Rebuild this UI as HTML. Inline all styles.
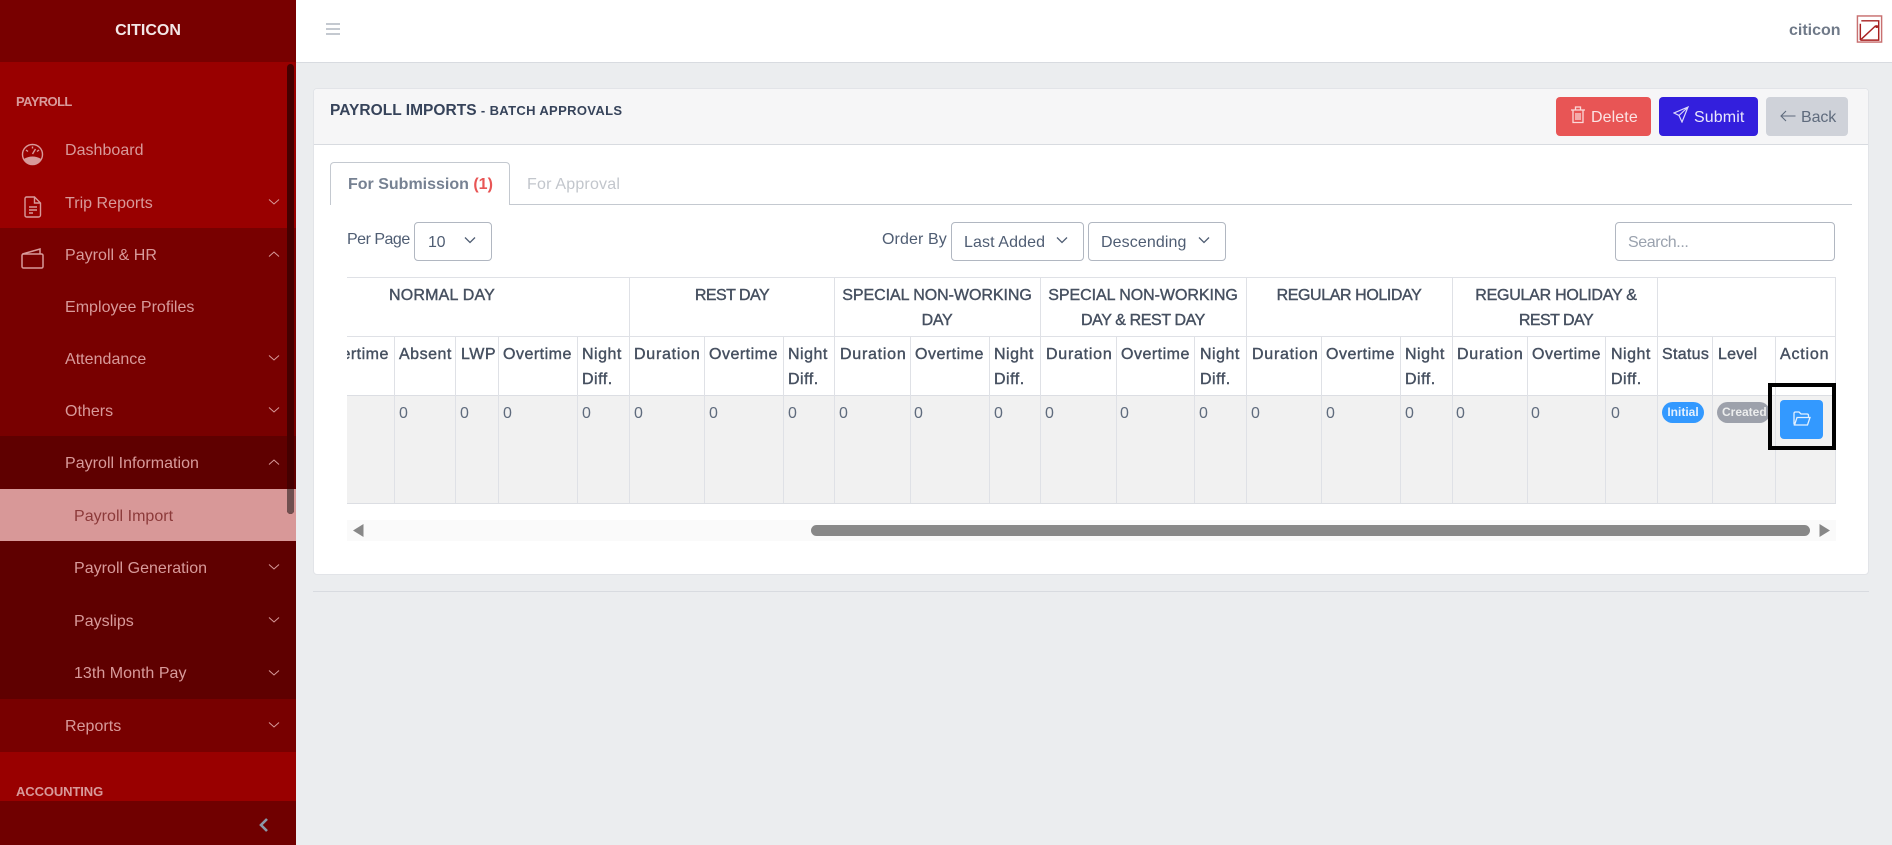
<!DOCTYPE html>
<html lang="en"><head><meta charset="utf-8"><title>Payroll Imports</title>
<style>
html,body{margin:0;padding:0;width:1892px;height:845px;overflow:hidden;background:#ebedef;font-family:"Liberation Sans",sans-serif;color:#4f5d73}
div,span,svg{position:absolute;box-sizing:border-box}
.t{white-space:nowrap;height:20px;line-height:20px;font-size:16px;letter-spacing:.35px;margin-top:1px}
.s{color:#d89a9a;left:65px;letter-spacing:.03px}
.s2{left:74px}
.h{color:#465060;-webkit-text-stroke:.4px #465060;letter-spacing:.5px}
.c{width:300px;text-align:center}
.v{color:#5f6b7d;letter-spacing:0;}
.vl{width:1px;background:#dfe1e6}
.chev{left:267px;width:14px;height:8px}
.sel{top:222px;height:39px;background:#fff;border:1px solid #b1b7c1;border-radius:4px}
</style></head><body>

<!-- sidebar -->
<div style="left:0;top:0;width:296px;height:845px;background:#990000"></div>
<div style="left:0;top:0;width:296px;height:62px;background:#780000"></div>
<div style="left:0;top:228px;width:296px;height:524px;background:#780000"></div>
<div style="left:0;top:436px;width:296px;height:263px;background:#5f0000"></div>
<div style="left:0;top:489px;width:296px;height:52px;background:#d89898"></div>
<div style="left:0;top:801px;width:296px;height:44px;background:#700000"></div>
<div style="left:287px;top:64px;width:7px;height:450px;background:#450000;border-radius:4px"></div>
<div style="left:287px;top:489px;width:7px;height:25px;background:#705050;border-radius:0 0 4px 4px"></div>

<div class="t" style="left:0;width:296px;text-align:center;top:20px;color:#f3e6e6;font-weight:bold;letter-spacing:0">CITICON</div>
<div class="t" style="left:16px;top:91px;color:#d89a9a;font-size:13px;font-weight:bold;letter-spacing:-.6px">PAYROLL</div>
<div class="t s" style="top:140px">Dashboard</div>
<div class="t s" style="top:193px">Trip Reports</div>
<div class="t s" style="top:245px">Payroll &amp; HR</div>
<div class="t s" style="top:297px">Employee Profiles</div>
<div class="t s" style="top:349px">Attendance</div>
<div class="t s" style="top:401px">Others</div>
<div class="t s" style="top:453px">Payroll Information</div>
<div class="t s s2" style="top:506px;color:#8c3a3a">Payroll Import</div>
<div class="t s s2" style="top:558px">Payroll Generation</div>
<div class="t s s2" style="top:611px">Payslips</div>
<div class="t s s2" style="top:663px">13th Month Pay</div>
<div class="t s" style="top:716px">Reports</div>
<div class="t" style="left:16px;top:781px;color:#d89a9a;font-size:13px;font-weight:bold;letter-spacing:-.1px">ACCOUNTING</div>

<svg style="left:21px;top:143px;width:23px;height:23px" viewBox="0 0 23 23" fill="none" stroke="#d89a9a" stroke-width="1.400"><circle cx="11.500" cy="11.500" r="10"/><path d="M2.800 16Q11.500 11 20.200 16A10 10 0 0 1 2.800 16Z" fill="#d89a9a" stroke="none"/><path d="M11.500 11l3-5M11.500 3.500v2M5 7l2 1.500M18 7l-2 1.500"/></svg>
<svg style="left:24px;top:196px;width:18px;height:22px" viewBox="0 0 18 22" fill="none" stroke="#d89a9a" stroke-width="1.400"><path d="M2.500 1h8l6 6v12a2 2 0 0 1-2 2h-12a1.500 1.500 0 0 1-1.500-1.500V2.500A1.500 1.500 0 0 1 2.500 1zM10.500 1v6h6M5 11h8M5 14h8M5 17h4"/></svg>
<svg style="left:21px;top:248px;width:23px;height:21px" viewBox="0 0 23 21" fill="none" stroke="#d89a9a" stroke-width="1.500"><rect x="1" y="6" width="21" height="14" rx="1.500"/><path d="M1.500 6L19 1v5"/></svg>

<svg class="chev" style="top:198px" viewBox="0 0 14 8" fill="none" stroke="#d89a9a"><path d="M2 1.500l5 4.500 5-4.500"/></svg>
<svg class="chev" style="top:250px" viewBox="0 0 14 8" fill="none" stroke="#d89a9a"><path d="M2 6.500l5-4.500 5 4.500"/></svg>
<svg class="chev" style="top:354px" viewBox="0 0 14 8" fill="none" stroke="#d89a9a"><path d="M2 1.500l5 4.500 5-4.500"/></svg>
<svg class="chev" style="top:406px" viewBox="0 0 14 8" fill="none" stroke="#d89a9a"><path d="M2 1.500l5 4.500 5-4.500"/></svg>
<svg class="chev" style="top:458px" viewBox="0 0 14 8" fill="none" stroke="#d89a9a"><path d="M2 6.500l5-4.500 5 4.500"/></svg>
<svg class="chev" style="top:563px" viewBox="0 0 14 8" fill="none" stroke="#d89a9a"><path d="M2 1.500l5 4.500 5-4.500"/></svg>
<svg class="chev" style="top:616px" viewBox="0 0 14 8" fill="none" stroke="#d89a9a"><path d="M2 1.500l5 4.500 5-4.500"/></svg>
<svg class="chev" style="top:669px" viewBox="0 0 14 8" fill="none" stroke="#d89a9a"><path d="M2 1.500l5 4.500 5-4.500"/></svg>
<svg class="chev" style="top:721px" viewBox="0 0 14 8" fill="none" stroke="#d89a9a"><path d="M2 1.500l5 4.500 5-4.500"/></svg>
<svg style="left:258px;top:817px;width:11px;height:16px" viewBox="0 0 11 16" fill="none" stroke="#8a98a8" stroke-width="2.600"><path d="M9 2L3 8l6 6"/></svg>

<!-- topbar -->
<div style="left:296px;top:0;width:1596px;height:63px;background:#fff;border-bottom:1px solid #d8dbe0"></div>
<svg style="left:325px;top:22px;width:16px;height:14px" viewBox="0 0 16 14" stroke="#8a93a1" stroke-width="1"><path d="M1 2h14M1 7h14M1 12h14"/></svg>
<div class="t" style="left:1789px;top:20px;color:#6f7988;font-weight:bold;letter-spacing:0">citicon</div>
<svg style="left:1856px;top:15px;width:28px;height:29px" viewBox="0 0 28 30" fill="none" stroke="#a82020"><rect x="1" y="1" width="25" height="27" stroke="#c87070" stroke-width="1.500"/><path d="M5 6h18v20H4" stroke-width="1.500"/><path d="M4 9v17M5 25L20 11" stroke-width="1.500"/><circle cx="21" cy="12" r="1" fill="#a82020"/></svg>

<!-- card -->
<div style="left:313px;top:88px;width:1556px;height:487px;background:#fff;border:1px solid #e2e4e8;border-radius:4px"></div>
<div style="left:314px;top:89px;width:1554px;height:56px;background:#f6f6f7;border-bottom:1px solid #d8dbe0;border-radius:4px 4px 0 0"></div>
<div class="t" style="left:330px;top:100px;color:#36435a;font-weight:bold;font-size:15.500px;letter-spacing:.03px">PAYROLL IMPORTS <span style="position:static;font-size:13px;letter-spacing:.35px">- BATCH APPROVALS</span></div>

<div style="left:1556px;top:97px;width:95px;height:39px;background:#e85555;border-radius:4px"></div>
<svg style="left:1571px;top:106px;width:14px;height:18px" viewBox="0 0 14 18" fill="none" stroke="#fbd9d9" stroke-width="1.300"><path d="M0 4h14M4.500 3.500V1h5v2.500M2 4.500v12h10v-12M5 7v7M7 7v7M9 7v7"/></svg>
<div class="t" style="left:1591px;top:107px;color:#fbe3e3;letter-spacing:.1px">Delete</div>
<div style="left:1659px;top:97px;width:99px;height:39px;background:#331fdd;border-radius:4px"></div>
<svg style="left:1673px;top:106px;width:16px;height:17px" viewBox="0 0 16 17" fill="none" stroke="#dcd8fb" stroke-width="1.200"><path d="M15 1L1 7l5 2.500L9 16zM15 1L6 9.500"/></svg>
<div class="t" style="left:1694px;top:107px;color:#e9e7fc;letter-spacing:.1px">Submit</div>
<div style="left:1766px;top:97px;width:82px;height:39px;background:#cfd2d9;border-radius:4px"></div>
<svg style="left:1780px;top:109px;width:16px;height:14px" viewBox="0 0 16 14" fill="none" stroke="#5f6b7d" stroke-width="1.100"><path d="M15.500 7H1M6 2L1 7l5 5"/></svg>
<div class="t" style="left:1801px;top:107px;color:#5f6b7d;letter-spacing:-.1px">Back</div>

<!-- tabs -->
<div style="left:330px;top:204px;width:1522px;height:1px;background:#c4c9d0"></div>
<div style="left:330px;top:162px;width:180px;height:43px;background:#fff;border:1px solid #c4c9d0;border-bottom:0;border-radius:4px 4px 0 0"></div>
<div class="t" style="left:348px;top:174px;color:#768192;font-weight:bold;letter-spacing:0">For Submission <span style="position:static;color:#e85555">(1)</span></div>
<div class="t" style="left:527px;top:174px;color:#c2c6cc;letter-spacing:.2px">For Approval</div>

<!-- controls -->
<div class="t" style="left:347px;top:229px;color:#4f5d73;letter-spacing:-.5px">Per Page</div>
<div class="sel" style="left:414px;width:78px"></div>
<div class="t" style="left:428px;top:232px;color:#4f5d73;letter-spacing:-.3px">10</div>
<svg style="left:464px;top:236px;width:12px;height:8px" viewBox="0 0 12 8" fill="none" stroke="#4f5d73" stroke-width="1.300"><path d="M1 1.500l5 5 5-5"/></svg>
<div class="t" style="left:882px;top:229px;color:#4f5d73;letter-spacing:.1px">Order By</div>
<div class="sel" style="left:951px;width:133px"></div>
<div class="t" style="left:964px;top:232px;color:#4f5d73;letter-spacing:.1px">Last Added</div>
<svg style="left:1056px;top:236px;width:12px;height:8px" viewBox="0 0 12 8" fill="none" stroke="#4f5d73" stroke-width="1.300"><path d="M1 1.500l5 5 5-5"/></svg>
<div class="sel" style="left:1088px;width:138px"></div>
<div class="t" style="left:1101px;top:232px;color:#4f5d73;letter-spacing:.1px">Descending</div>
<svg style="left:1198px;top:236px;width:12px;height:8px" viewBox="0 0 12 8" fill="none" stroke="#4f5d73" stroke-width="1.300"><path d="M1 1.500l5 5 5-5"/></svg>
<div class="sel" style="left:1615px;width:220px"></div>
<div class="t" style="left:1628px;top:232px;color:#9aa2ae;letter-spacing:-.4px">Search...</div>

<!-- table -->
<div style="left:347px;top:395px;width:1489px;height:108px;background:#f1f1f1"></div>
<div style="left:347px;top:277px;width:1489px;height:1px;background:#dfe1e6"></div>
<div style="left:347px;top:336px;width:1489px;height:1px;background:#dfe1e6"></div>
<div style="left:347px;top:395px;width:1489px;height:1px;background:#dcdee3"></div>
<div style="left:347px;top:503px;width:1489px;height:1px;background:#dcdee3"></div>

<div class="vl" style="left:629px;top:277px;height:59px"></div>
<div class="vl" style="left:834px;top:277px;height:59px"></div>
<div class="vl" style="left:1040px;top:277px;height:59px"></div>
<div class="vl" style="left:1246px;top:277px;height:59px"></div>
<div class="vl" style="left:1452px;top:277px;height:59px"></div>
<div class="vl" style="left:1657px;top:277px;height:59px"></div>
<div class="vl" style="left:1835px;top:277px;height:226px"></div>

<div class="vl" style="left:394px;top:336px;height:167px"></div>
<div class="vl" style="left:455px;top:336px;height:167px"></div>
<div class="vl" style="left:498px;top:336px;height:167px"></div>
<div class="vl" style="left:577px;top:336px;height:167px"></div>
<div class="vl" style="left:629px;top:336px;height:167px"></div>
<div class="vl" style="left:704px;top:336px;height:167px"></div>
<div class="vl" style="left:783px;top:336px;height:167px"></div>
<div class="vl" style="left:834px;top:336px;height:167px"></div>
<div class="vl" style="left:910px;top:336px;height:167px"></div>
<div class="vl" style="left:989px;top:336px;height:167px"></div>
<div class="vl" style="left:1040px;top:336px;height:167px"></div>
<div class="vl" style="left:1116px;top:336px;height:167px"></div>
<div class="vl" style="left:1194px;top:336px;height:167px"></div>
<div class="vl" style="left:1246px;top:336px;height:167px"></div>
<div class="vl" style="left:1321px;top:336px;height:167px"></div>
<div class="vl" style="left:1400px;top:336px;height:167px"></div>
<div class="vl" style="left:1452px;top:336px;height:167px"></div>
<div class="vl" style="left:1527px;top:336px;height:167px"></div>
<div class="vl" style="left:1605px;top:336px;height:167px"></div>
<div class="vl" style="left:1657px;top:336px;height:167px"></div>
<div class="vl" style="left:1712px;top:336px;height:167px"></div>
<div class="vl" style="left:1775px;top:336px;height:167px"></div>

<!-- group headings -->
<div class="t h c" style="left:292px;top:285px;letter-spacing:.2px">NORMAL DAY</div>
<div class="t h c" style="left:582px;top:285px;letter-spacing:-.55px">REST DAY</div>
<div class="t h c" style="left:787px;top:285px;letter-spacing:-.05px">SPECIAL NON-WORKING</div>
<div class="t h c" style="left:787px;top:310px;letter-spacing:-.3px">DAY</div>
<div class="t h c" style="left:993px;top:285px;letter-spacing:-.05px">SPECIAL NON-WORKING</div>
<div class="t h c" style="left:993px;top:310px;letter-spacing:-.4px">DAY &amp; REST DAY</div>
<div class="t h c" style="left:1199px;top:285px;letter-spacing:-.4px">REGULAR HOLIDAY</div>
<div class="t h c" style="left:1406px;top:285px;letter-spacing:-.25px">REGULAR HOLIDAY &amp;</div>
<div class="t h c" style="left:1406px;top:310px;letter-spacing:-.55px">REST DAY</div>

<!-- column headings -->
<div style="left:347px;top:345px;width:47px;height:20px;overflow:hidden"><div class="t h" style="left:-27px;top:-1px">Overtime</div></div>
<div class="t h" style="left:399px;top:344px">Absent</div>
<div class="t h" style="left:461px;top:344px">LWP</div>
<div class="t h" style="left:503px;top:344px">Overtime</div>
<div class="t h" style="left:582px;top:344px">Night</div><div class="t h" style="left:582px;top:369px">Diff.</div>
<div class="t h" style="left:634px;top:344px;letter-spacing:.75px">Duration</div>
<div class="t h" style="left:709px;top:344px">Overtime</div>
<div class="t h" style="left:788px;top:344px">Night</div><div class="t h" style="left:788px;top:369px">Diff.</div>
<div class="t h" style="left:840px;top:344px;letter-spacing:.75px">Duration</div>
<div class="t h" style="left:915px;top:344px">Overtime</div>
<div class="t h" style="left:994px;top:344px">Night</div><div class="t h" style="left:994px;top:369px">Diff.</div>
<div class="t h" style="left:1046px;top:344px;letter-spacing:.75px">Duration</div>
<div class="t h" style="left:1121px;top:344px">Overtime</div>
<div class="t h" style="left:1200px;top:344px">Night</div><div class="t h" style="left:1200px;top:369px">Diff.</div>
<div class="t h" style="left:1252px;top:344px;letter-spacing:.75px">Duration</div>
<div class="t h" style="left:1326px;top:344px">Overtime</div>
<div class="t h" style="left:1405px;top:344px">Night</div><div class="t h" style="left:1405px;top:369px">Diff.</div>
<div class="t h" style="left:1457px;top:344px;letter-spacing:.75px">Duration</div>
<div class="t h" style="left:1532px;top:344px">Overtime</div>
<div class="t h" style="left:1611px;top:344px">Night</div><div class="t h" style="left:1611px;top:369px">Diff.</div>
<div class="t h" style="left:1662px;top:344px;letter-spacing:.3px">Status</div>
<div class="t h" style="left:1718px;top:344px;letter-spacing:.2px">Level</div>
<div class="t h" style="left:1780px;top:344px;letter-spacing:.8px">Action</div>

<!-- values -->
<div class="t v" style="left:399px;top:403px">0</div>
<div class="t v" style="left:460px;top:403px">0</div>
<div class="t v" style="left:503px;top:403px">0</div>
<div class="t v" style="left:582px;top:403px">0</div>
<div class="t v" style="left:634px;top:403px">0</div>
<div class="t v" style="left:709px;top:403px">0</div>
<div class="t v" style="left:788px;top:403px">0</div>
<div class="t v" style="left:839px;top:403px">0</div>
<div class="t v" style="left:914px;top:403px">0</div>
<div class="t v" style="left:994px;top:403px">0</div>
<div class="t v" style="left:1045px;top:403px">0</div>
<div class="t v" style="left:1120px;top:403px">0</div>
<div class="t v" style="left:1199px;top:403px">0</div>
<div class="t v" style="left:1251px;top:403px">0</div>
<div class="t v" style="left:1326px;top:403px">0</div>
<div class="t v" style="left:1405px;top:403px">0</div>
<div class="t v" style="left:1456px;top:403px">0</div>
<div class="t v" style="left:1531px;top:403px">0</div>
<div class="t v" style="left:1611px;top:403px">0</div>

<!-- badges -->
<div style="left:1662px;top:402px;width:42px;height:21px;background:#3399ff;border-radius:11px"></div>
<div class="t" style="left:1662px;width:42px;text-align:center;top:401px;font-size:12px;font-weight:bold;color:#e4f1ff;letter-spacing:0">Initial</div>
<div style="left:1717px;top:402px;width:53px;height:21px;background:#9da1ab;border-radius:11px"></div>
<div class="t" style="left:1722px;top:401px;font-size:12px;font-weight:bold;color:#eceded;letter-spacing:0">Created</div>

<!-- action -->
<div style="left:1768px;top:383px;width:68px;height:67px;border:4px solid #000"></div>
<div style="left:1780px;top:400px;width:43px;height:39px;background:#3399ff;border-radius:4px"></div>
<svg style="left:1793px;top:411px;width:18px;height:15px" viewBox="0 0 18 15" fill="none" stroke="#e4f1ff" stroke-width="1.300"><path d="M1 13.500V2.500Q1 1 2.500 1H6l2 2h6q1.500 0 1.500 1.500V6M1.500 14L4 6.500h13L14.500 14z"/></svg>

<!-- scrollbar -->
<div style="left:347px;top:520px;width:1489px;height:21px;background:#fafafa"></div>
<svg style="left:353px;top:524px;width:11px;height:13px" viewBox="0 0 11 13" fill="#888"><path d="M0 6.500L10.500 0v13z"/></svg>
<svg style="left:1819px;top:524px;width:11px;height:13px" viewBox="0 0 11 13" fill="#888"><path d="M11 6.500L.5 0v13z"/></svg>
<div style="left:811px;top:525px;width:999px;height:11px;background:#888;border-radius:6px"></div>

<!-- footer line -->
<div style="left:313px;top:591px;width:1556px;height:1px;background:#d8dbe0"></div>
</body></html>
